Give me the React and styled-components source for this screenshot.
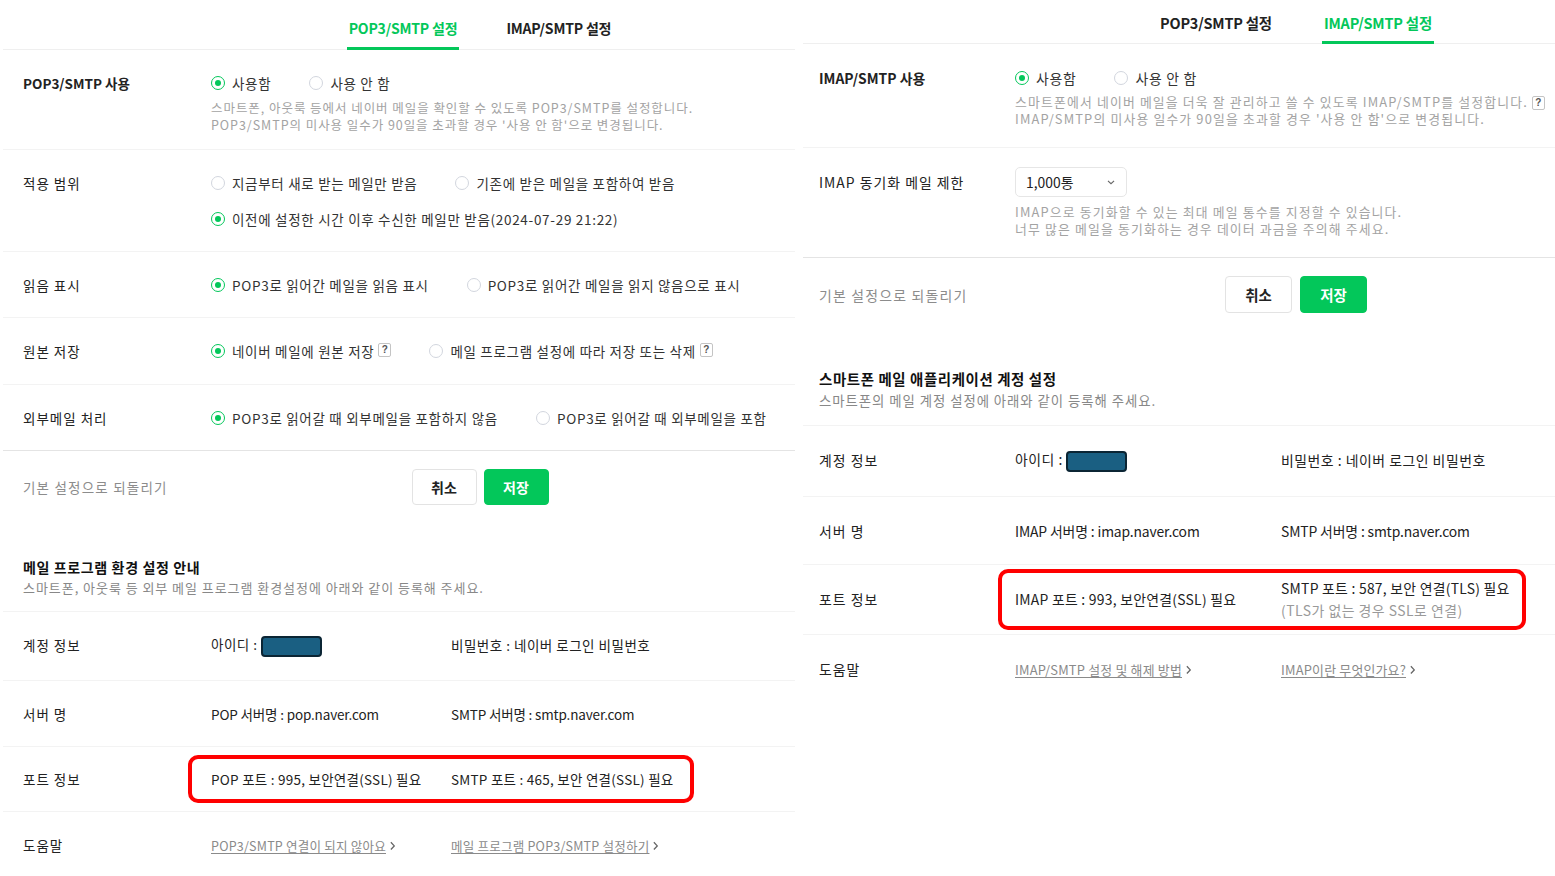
import React from "react";
import styled, { createGlobalStyle, ThemeProvider } from "styled-components";

const GREEN = "#03c75a";

const GlobalStyle = createGlobalStyle`
  html, body { margin: 0; padding: 0; background: #fff; }
  body {
    font-family: "Noto Sans CJK KR", "Noto Sans", "Liberation Sans", sans-serif;
    color: #222;
    -webkit-font-smoothing: antialiased;
  }
  * { box-sizing: border-box; }
`;

const leftTheme = {
  base: 13.5, padL: 20, labelW: 188, col2W: 240, inner: 954, width: 792,
  tabH: 50, tabPt: 9, tabGap: 45, btnW: 65, btnH: 36, btnGap: 7,
  hlShift: 23, hlPadL: 19, hlPadR: 17, descLs: 0.95,
};
const rightTheme = {
  base: 13.9, padL: 16, labelW: 196, col2W: 266, inner: 986, width: 752,
  tabH: 44, tabPt: 3, tabGap: 48, btnW: 67, btnH: 37, btnGap: 8,
  hlShift: 17, hlPadL: 13, hlPadR: 12, descLs: 1.15,
};

const Page = styled.div`
  display: flex;
  gap: 8px;
  padding-left: 3px;
  width: 1555px;
  height: 876px;
  overflow: hidden;
`;

const Panel = styled.section`
  flex-shrink: 0;
  width: ${(p) => p.theme.width}px;
  overflow: hidden;
  font-size: ${(p) => p.theme.base}px;
`;

const Inner = styled.div`
  width: ${(p) => p.theme.inner}px;
`;

const TabBar = styled.nav`
  display: flex;
  justify-content: center;
  gap: ${(p) => p.theme.tabGap}px;
  height: ${(p) => p.theme.tabH}px;
  border-bottom: 1px solid #efefef;
`;

const Tab = styled.div`
  display: flex;
  align-items: center;
  padding: ${(p) => p.theme.tabPt}px 2px 0;
  margin-bottom: -1px;
  font-size: 1.04em;
  font-weight: 700;
  letter-spacing: -0.2px;
  color: ${(p) => (p.$active ? GREEN : "#222")};
  border-bottom: 3px solid ${(p) => (p.$active ? GREEN : "transparent")};
`;

const Row = styled.div`
  display: flex;
  align-items: flex-start;
  padding: ${(p) => p.$pt}px 0 ${(p) => p.$pb}px ${(p) => p.theme.padL}px;
  border-bottom: 1px solid ${(p) => (p.$strong ? "#e4e4e4" : "#f3f3f3")};
`;

const Label = styled.div`
  flex-shrink: 0;
  width: ${(p) => p.theme.labelW}px;
  line-height: ${(p) => p.$lh || 20}px;
  font-weight: ${(p) => (p.$bold ? 700 : 400)};
  letter-spacing: ${(p) => (p.$bold ? 0 : 1)}px;
  color: #222;
  white-space: nowrap;
`;

const Value = styled.div`
  flex: 1;
  min-width: 0;
`;

const OptionLine = styled.div`
  display: flex;
  align-items: center;
  gap: 38px;
  height: 20px;
  margin-top: ${(p) => p.$mt || 0}px;
`;

const RadioOption = styled.label`
  display: inline-flex;
  align-items: center;
  gap: 7px;
  color: #333;
  letter-spacing: 0.7px;
  white-space: nowrap;
`;

const OptionText = styled.span`
  display: inline-flex;
  align-items: center;
  line-height: 20px;
`;

const RadioMark = styled.span`
  position: relative;
  width: 14px;
  height: 14px;
  border-radius: 50%;
  flex-shrink: 0;
  border: ${(p) => (p.$checked ? `1.5px solid ${GREEN}` : "1px solid #d2d6de")};
  background: #fff;
  &::after {
    content: "";
    display: ${(p) => (p.$checked ? "block" : "none")};
    position: absolute;
    left: 50%;
    top: 50%;
    width: 6px;
    height: 6px;
    margin: -3px 0 0 -3px;
    border-radius: 50%;
    background: ${GREEN};
  }
`;

const HelpIcon = styled.span`
  display: inline-block;
  width: 13px;
  height: 14px;
  margin-left: 4px;
  border: 1px solid #c4c4c4;
  border-radius: 2px;
  font-size: 10px;
  font-weight: 700;
  line-height: 12px;
  text-align: center;
  letter-spacing: 0;
  color: #555;
  vertical-align: middle;
  position: relative;
  top: -1px;
  font-family: "Liberation Sans", sans-serif;
`;

const Desc = styled.p`
  margin: ${(p) => p.$mt || 6}px 0 0;
  font-size: 0.926em;
  line-height: 17px;
  letter-spacing: ${(p) => p.theme.descLs}px;
  color: #a3a3a3;
  white-space: nowrap;
`;

const DescLine = styled.span`
  display: block;
  height: 17px;
`;

const Select = styled.div`
  display: flex;
  align-items: center;
  justify-content: space-between;
  width: 112px;
  height: 30px;
  padding: 0 12px 0 10px;
  border: 1px solid #e6e6e6;
  border-radius: 5px;
  color: #222;
  letter-spacing: 0;
`;

const Footer = styled.div`
  display: grid;
  grid-template-columns: 1fr auto 1fr;
  align-items: center;
  padding: ${(p) => p.$pt}px 0 ${(p) => p.$pb}px;
`;

const ResetText = styled.span`
  padding-left: ${(p) => p.theme.padL}px;
  color: #8c8c8c;
  letter-spacing: 1.2px;
`;

const Buttons = styled.div`
  display: flex;
  gap: ${(p) => p.theme.btnGap}px;
`;

const Button = styled.button`
  width: ${(p) => p.theme.btnW}px;
  height: ${(p) => p.theme.btnH}px;
  border-radius: 4px;
  font-family: inherit;
  font-size: 1.04em;
  font-weight: 700;
  cursor: pointer;
  border: 1px solid ${(p) => (p.$primary ? GREEN : "#e3e3e3")};
  background: ${(p) => (p.$primary ? GREEN : "#fff")};
  color: ${(p) => (p.$primary ? "#fff" : "#222")};
`;

const SectionHead = styled.div`
  padding: ${(p) => p.$pt}px 0 ${(p) => p.$pb}px ${(p) => p.theme.padL}px;
  border-bottom: 1px solid #f3f3f3;
`;

const SectionTitle = styled.h3`
  margin: 0;
  font-size: 1.04em;
  font-weight: 700;
  line-height: 20px;
  letter-spacing: 0.6px;
  color: #111;
`;

const SectionSub = styled.p`
  margin: 1px 0 0;
  font-size: 0.963em;
  line-height: 20px;
  color: #888;
  letter-spacing: 0.95px;
`;

const TableRow = styled.div`
  display: flex;
  align-items: center;
  padding: ${(p) => p.$pt}px 0 ${(p) => p.$pb}px ${(p) => p.theme.padL}px;
  border-bottom: ${(p) => (p.$last ? "none" : "1px solid #f3f3f3")};
`;

const Cell = styled.div`
  flex-shrink: 0;
  width: ${(p) => (p.$wide ? `${p.theme.col2W}px` : "auto")};
  line-height: ${(p) => (p.$tall ? 22 : 20)}px;
  color: #222;
  letter-spacing: ${(p) => (p.$latin ? -0.15 : 0.5)}px;
  white-space: nowrap;
`;

const SubNote = styled.div`
  color: #9a9a9a;
`;

const IdMask = styled.span`
  display: inline-block;
  width: 61px;
  height: 21px;
  margin-left: 3px;
  vertical-align: middle;
  background: #1a5f82;
  border: 2px solid #0b2534;
  border-radius: 4px;
`;

const Highlight = styled.div`
  display: flex;
  align-items: center;
  margin-left: -${(p) => p.theme.hlShift}px;
  padding: ${(p) => p.$py}px ${(p) => p.theme.hlPadR}px ${(p) => p.$py}px ${(p) => p.theme.hlPadL}px;
  border: 4px solid #ff0000;
  border-radius: 10px;
`;

const PortText = styled.span`
  letter-spacing: 0.25px;
`;

const HelpLink = styled.a`
  display: inline-flex;
  align-items: center;
  color: #8a8a8a;
  font-size: 0.93em;
  text-decoration: none;
  letter-spacing: 0.2px;
  span {
    text-decoration: underline;
    text-underline-offset: 2px;
  }
`;

const Chevron = ({ size = 7, down = false }) => (
  <svg
    width={size}
    height={size * 1.4}
    viewBox="0 0 6 9"
    style={{ marginLeft: 3, transform: down ? "rotate(90deg)" : undefined }}
    fill="none"
    stroke="#666"
    strokeWidth="1.2"
  >
    <path d="M1.5 1.2 L4.6 4.5 L1.5 7.8" />
  </svg>
);

const Radio = ({ checked, children }) => (
  <RadioOption>
    <RadioMark $checked={checked} />
    <OptionText>{children}</OptionText>
  </RadioOption>
);

const Link = ({ children }) => (
  <HelpLink href="#">
    <span>{children}</span>
    <Chevron />
  </HelpLink>
);

function PopPanel() {
  return (
    <ThemeProvider theme={leftTheme}>
      <Panel>
        <Inner>
          <TabBar>
            <Tab $active>POP3/SMTP 설정</Tab>
            <Tab>IMAP/SMTP 설정</Tab>
          </TabBar>

          <Row $pt={23} $pb={16}>
            <Label $bold>POP3/SMTP 사용</Label>
            <Value>
              <OptionLine>
                <Radio checked>사용함</Radio>
                <Radio>사용 안 함</Radio>
              </OptionLine>
              <Desc>
                <DescLine>스마트폰, 아웃룩 등에서 네이버 메일을 확인할 수 있도록 POP3/SMTP를 설정합니다.</DescLine>
                <DescLine>POP3/SMTP의 미사용 일수가 90일을 초과할 경우 '사용 안 함'으로 변경됩니다.</DescLine>
              </Desc>
            </Value>
          </Row>

          <Row $pt={23} $pb={22}>
            <Label>적용 범위</Label>
            <Value>
              <OptionLine>
                <Radio>지금부터 새로 받는 메일만 받음</Radio>
                <Radio>기존에 받은 메일을 포함하여 받음</Radio>
              </OptionLine>
              <OptionLine $mt={16}>
                <Radio checked>이전에 설정한 시간 이후 수신한 메일만 받음(2024-07-29 21:22)</Radio>
              </OptionLine>
            </Value>
          </Row>

          <Row $pt={23} $pb={22}>
            <Label>읽음 표시</Label>
            <Value>
              <OptionLine>
                <Radio checked>POP3로 읽어간 메일을 읽음 표시</Radio>
                <Radio>POP3로 읽어간 메일을 읽지 않음으로 표시</Radio>
              </OptionLine>
            </Value>
          </Row>

          <Row $pt={23} $pb={23}>
            <Label>원본 저장</Label>
            <Value>
              <OptionLine>
                <Radio checked>
                  네이버 메일에 원본 저장<HelpIcon>?</HelpIcon>
                </Radio>
                <Radio>
                  메일 프로그램 설정에 따라 저장 또는 삭제<HelpIcon>?</HelpIcon>
                </Radio>
              </OptionLine>
            </Value>
          </Row>

          <Row $pt={23} $pb={22} $strong>
            <Label>외부메일 처리</Label>
            <Value>
              <OptionLine>
                <Radio checked>POP3로 읽어갈 때 외부메일을 포함하지 않음</Radio>
                <Radio>POP3로 읽어갈 때 외부메일을 포함</Radio>
              </OptionLine>
            </Value>
          </Row>

          <Footer $pt={18} $pb={17}>
            <ResetText>기본 설정으로 되돌리기</ResetText>
            <Buttons>
              <Button>취소</Button>
              <Button $primary>저장</Button>
            </Buttons>
            <span />
          </Footer>

          <SectionHead $pt={35} $pb={13}>
            <SectionTitle>메일 프로그램 환경 설정 안내</SectionTitle>
            <SectionSub>스마트폰, 아웃룩 등 외부 메일 프로그램 환경설정에 아래와 같이 등록해 주세요.</SectionSub>
          </SectionHead>

          <TableRow $pt={22} $pb={23}>
            <Label>계정 정보</Label>
            <Cell $wide>
              아이디 :<IdMask />
            </Cell>
            <Cell>비밀번호 : 네이버 로그인 비밀번호</Cell>
          </TableRow>

          <TableRow $pt={23} $pb={22}>
            <Label>서버 명</Label>
            <Cell $wide $latin>POP 서버명 : pop.naver.com</Cell>
            <Cell $latin>SMTP 서버명 : smtp.naver.com</Cell>
          </TableRow>

          <TableRow $pt={8} $pb={8}>
            <Label>포트 정보</Label>
            <Highlight $py={10}>
              <Cell $wide>
                <PortText>POP 포트 : 995, 보안연결(SSL) 필요</PortText>
              </Cell>
              <Cell>
                <PortText>SMTP 포트 : 465, 보안 연결(SSL) 필요</PortText>
              </Cell>
            </Highlight>
          </TableRow>

          <TableRow $pt={23} $pb={22} $last>
            <Label>도움말</Label>
            <Cell $wide>
              <Link>POP3/SMTP 연결이 되지 않아요</Link>
            </Cell>
            <Cell>
              <Link>메일 프로그램 POP3/SMTP 설정하기</Link>
            </Cell>
          </TableRow>
        </Inner>
      </Panel>
    </ThemeProvider>
  );
}

function ImapPanel() {
  return (
    <ThemeProvider theme={rightTheme}>
      <Panel>
        <Inner>
          <TabBar>
            <Tab>POP3/SMTP 설정</Tab>
            <Tab $active>IMAP/SMTP 설정</Tab>
          </TabBar>

          <Row $pt={24} $pb={20}>
            <Label $bold>IMAP/SMTP 사용</Label>
            <Value>
              <OptionLine>
                <Radio checked>사용함</Radio>
                <Radio>사용 안 함</Radio>
              </OptionLine>
              <Desc $mt={5}>
                <DescLine>
                  스마트폰에서 네이버 메일을 더욱 잘 관리하고 쓸 수 있도록 IMAP/SMTP를 설정합니다.
                  <HelpIcon>?</HelpIcon>
                </DescLine>
                <DescLine>IMAP/SMTP의 미사용 일수가 90일을 초과할 경우 '사용 안 함'으로 변경됩니다.</DescLine>
              </Desc>
            </Value>
          </Row>

          <Row $pt={19} $pb={20} $strong>
            <Label $lh={30}>IMAP 동기화 메일 제한</Label>
            <Value>
              <Select>
                1,000통
                <Chevron size={6} down />
              </Select>
              <Desc $mt={6}>
                <DescLine>IMAP으로 동기화할 수 있는 최대 메일 통수를 지정할 수 있습니다.</DescLine>
                <DescLine>너무 많은 메일을 동기화하는 경우 데이터 과금을 주의해 주세요.</DescLine>
              </Desc>
            </Value>
          </Row>

          <Footer $pt={18} $pb={20}>
            <ResetText>기본 설정으로 되돌리기</ResetText>
            <Buttons>
              <Button>취소</Button>
              <Button $primary>저장</Button>
            </Buttons>
            <span />
          </Footer>

          <SectionHead $pt={36} $pb={15}>
            <SectionTitle>스마트폰 메일 애플리케이션 계정 설정</SectionTitle>
            <SectionSub>스마트폰의 메일 계정 설정에 아래와 같이 등록해 주세요.</SectionSub>
          </SectionHead>

          <TableRow $pt={23} $pb={24}>
            <Label>계정 정보</Label>
            <Cell $wide>
              아이디 :<IdMask />
            </Cell>
            <Cell>비밀번호 : 네이버 로그인 비밀번호</Cell>
          </TableRow>

          <TableRow $pt={24} $pb={23}>
            <Label>서버 명</Label>
            <Cell $wide $latin>IMAP 서버명 : imap.naver.com</Cell>
            <Cell $latin>SMTP 서버명 : smtp.naver.com</Cell>
          </TableRow>

          <TableRow $pt={4} $pb={4}>
            <Label>포트 정보</Label>
            <Highlight $py={4.5}>
              <Cell $wide>
                <PortText>IMAP 포트 : 993, 보안연결(SSL) 필요</PortText>
              </Cell>
              <Cell $tall>
                <PortText>SMTP 포트 : 587, 보안 연결(TLS) 필요</PortText>
                <SubNote>(TLS가 없는 경우 SSL로 연결)</SubNote>
              </Cell>
            </Highlight>
          </TableRow>

          <TableRow $pt={24} $pb={24} $last>
            <Label>도움말</Label>
            <Cell $wide>
              <Link>IMAP/SMTP 설정 및 해제 방법</Link>
            </Cell>
            <Cell>
              <Link>IMAP이란 무엇인가요?</Link>
            </Cell>
          </TableRow>
        </Inner>
      </Panel>
    </ThemeProvider>
  );
}

export default function App() {
  return (
    <>
      <GlobalStyle />
      <Page>
        <PopPanel />
        <ImapPanel />
      </Page>
    </>
  );
}
